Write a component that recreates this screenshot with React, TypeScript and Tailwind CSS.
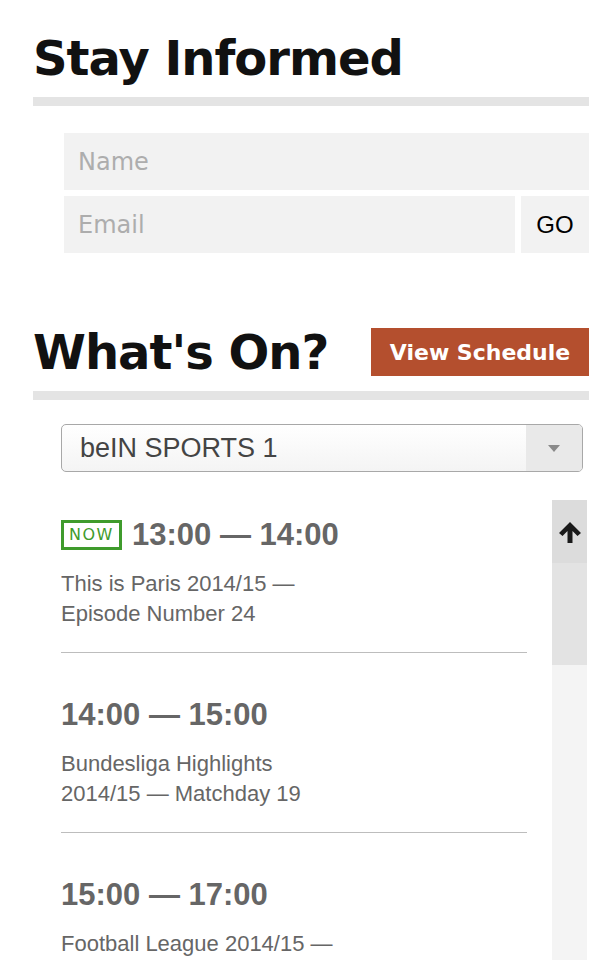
interface Slot {
  time: string
  lines: string[]
  now?: boolean
}

const slots: Slot[] = [
  { time: "13:00 — 14:00", lines: ["This is Paris 2014/15 —", "Episode Number 24"], now: true },
  { time: "14:00 — 15:00", lines: ["Bundesliga Highlights", "2014/15 — Matchday 19"] },
  { time: "15:00 — 17:00", lines: ["Football League 2014/15 —"] },
]

const headingFont = { fontFamily: '"DejaVu Sans", Verdana, sans-serif' }
const bodyFont = { fontFamily: '"Liberation Sans", Arial, sans-serif' }

const App = () => {
  return (
    <div className="w-[614px] h-[960px] overflow-hidden bg-white pl-[33px] pr-[25px] pt-[34px]">
      {/* Stay Informed */}
      <h2 style={headingFont} className="text-[48px] leading-[48px] font-bold tracking-[-1px] text-[#111]">
        Stay Informed
      </h2>
      <div className="mt-[15px] h-[9px] bg-[#e4e4e4]" />

      <form className="mt-[27px] ml-[31px] flex flex-col gap-[6px]" onSubmit={(e) => e.preventDefault()}>
        <input
          style={headingFont}
          className="h-[57px] w-full bg-[#f2f2f2] px-[14px] text-[24px] text-[#333] placeholder:text-[#adadad] outline-none"
          placeholder="Name"
        />
        <div className="flex gap-[6px]">
          <input
            style={headingFont}
            className="h-[57px] min-w-0 flex-1 bg-[#f2f2f2] px-[14px] text-[24px] text-[#333] placeholder:text-[#adadad] outline-none"
            placeholder="Email"
          />
          <button style={bodyFont} className="h-[57px] w-[68px] bg-[#f2f2f2] text-[24px] text-black">
            GO
          </button>
        </div>
      </form>

      {/* What's On */}
      <div className="mt-[75px] flex items-center justify-between">
        <h2 style={headingFont} className="text-[48px] leading-[48px] font-bold tracking-[-1px] text-[#111]">
          What's On?
        </h2>
        <button
          style={headingFont}
          className="h-[48px] w-[218px] bg-[#b44f2e] text-[22px] font-bold text-white"
        >
          View Schedule
        </button>
      </div>
      <div className="mt-[15px] h-[9px] bg-[#e4e4e4]" />

      <div className="mt-[24px] ml-[28px] mr-[6px] flex h-[48px] items-stretch overflow-hidden rounded-[5px] border border-[#a8a8a8] bg-gradient-to-b from-white to-[#f4f4f4]">
        <div style={bodyFont} className="flex flex-1 items-center pl-[18px] text-[27px] text-[#444]">
          beIN SPORTS 1
        </div>
        <div className="flex w-[56px] items-center justify-center bg-[#e9e9e9]">
          <svg width="12" height="7" viewBox="0 0 12 7">
            <path d="M0 0 L12 0 L6 7 Z" fill="#8a8a8a" />
          </svg>
        </div>
      </div>

      {/* schedule list */}
      <div className="mt-[28px] ml-[28px] mr-[2px] flex h-[460px] gap-[25px] overflow-hidden">
        <div style={bodyFont} className="flex-1 text-[#666]">
          {slots.map((slot, i) => (
            <div key={slot.time} className={i === 0 ? "pt-[17px]" : "pt-[44px]"}>
              <div className="flex h-[36px] items-center gap-[10px]">
                {slot.now && (
                  <span
                    style={headingFont}
                    className="flex h-[30px] w-[61px] items-center justify-center border-[3px] border-[#3f9b2c] text-[16px] tracking-[1.5px] text-[#3f9b2c]"
                  >
                    NOW
                  </span>
                )}
                <span className="text-[31px] font-bold leading-[36px]">{slot.time}</span>
              </div>
              <div className="mt-[16px] text-[22px] leading-[30px]">
                {slot.lines.map((l) => (
                  <div key={l}>{l}</div>
                ))}
              </div>
              {i < slots.length - 1 && <div className="mt-[23px] h-px bg-[#bdbdbd]" />}
            </div>
          ))}
        </div>

        <div className="flex w-[35px] flex-col bg-[#f4f4f4]">
          <div className="flex h-[63px] items-center justify-center bg-[#dcdcdc]">
            <svg width="24" height="24" viewBox="0 0 24 24">
              <path d="M12 2 L23 13 L19.5 16 L14.5 11 L14.5 23 L9.5 23 L9.5 11 L4.5 16 L1 13 Z" fill="#1a1a1a" />
            </svg>
          </div>
          <div className="h-[102px] bg-[#e3e3e3]" />
        </div>
      </div>
    </div>
  )
}

export default App
